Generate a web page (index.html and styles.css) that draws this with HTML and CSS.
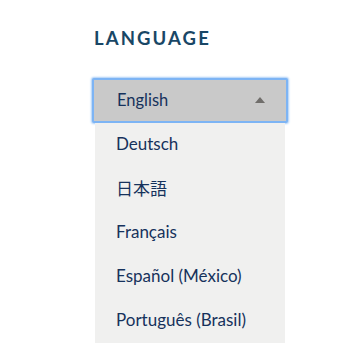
FILE: index.html
```html
<!DOCTYPE html>
<html lang="en">
<head>
<meta charset="utf-8">
<link rel="stylesheet" href="styles.css">
</head>
<body>
<div class="lang">
  <h2 class="lang-title">LANGUAGE</h2>
  <div class="select">
    <button class="select-btn">
      <span>English</span>
      <svg class="caret" width="10" height="6" viewBox="0 0 10 6"><path d="M0 6 L5 0 L10 6 Z" fill="#706e6b"/></svg>
    </button>
    <ul class="options">
      <li>Deutsch</li>
      <li lang="ja">日本語</li>
      <li>Français</li>
      <li>Español (México)</li>
      <li>Português (Brasil)</li>
    </ul>
  </div>
</div>
</body>
</html>
```

FILE: styles.css
```css
html, body {
  margin: 0;
  padding: 0;
  background: #ffffff;
}
.lang {
  padding: 27px 0 0 95px;
  width: 190px;
}
.lang-title {
  margin: 0 0 29px -1px;
  font-family: Lato, "Liberation Sans", sans-serif;
  font-weight: 700;
  font-size: 18.5px;
  line-height: 22px;
  letter-spacing: 2.1px;
  color: #194766;
}
.select {
  display: flex;
  flex-direction: column;
}
.select-btn {
  display: flex;
  align-items: center;
  justify-content: space-between;
  box-sizing: border-box;
  width: 196px;
  height: 45px;
  margin-left: -3px;
  padding: 0 21px 2px 23px;
  background: #c9c9c9;
  border: 2px solid #7db4f4;
  border-radius: 2px;
  box-shadow: 0 0 2px 1px #a9cdf7;
  font-family: Lato, "Liberation Sans", sans-serif;
  font-size: 16.5px;
  color: #16325c;
  cursor: pointer;
}
.caret {
  display: block;
  margin-top: 1px;
}
.options {
  list-style: none;
  margin: 0;
  padding: 0;
  background: #f0f0ef;
  width: 190px;
}
.options li {
  box-sizing: border-box;
  height: 44px;
  display: flex;
  align-items: center;
  padding: 0 0 4px 21px;
  font-family: Lato, "Noto Sans CJK JP", sans-serif;
  font-size: 17px;
  color: #16325c;
}
```
